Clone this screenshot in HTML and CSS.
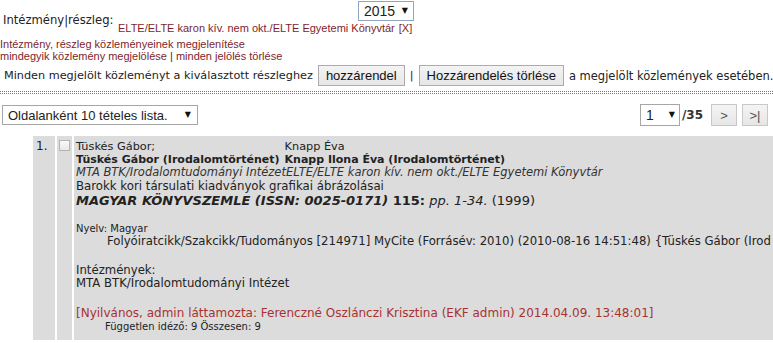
FILE: index.html
```html
<!DOCTYPE html>
<html lang="hu">
<head>
    <meta charset="UTF-8">
    <meta name="viewport" content="width=device-width, initial-scale=1.0">
    <title>Közlemények listája</title>
    <link rel="stylesheet" href="styles.css">
</head>
<body>
    <div class="filter">
        <span class="filter-label">Intézmény|részleg:</span>
        <div class="filter-pick">
            <span class="selectbox year"><select><option>2015</option></select></span>
            <span class="unit">ELTE/ELTE karon kív. nem okt./ELTE Egyetemi Könyvtár <a href="#">[X]</a></span>
        </div>
    </div>

    <div class="links">
        <a href="#">Intézmény, részleg közleményeinek megjelenítése</a><br>
        <a href="#">mindegyik közlemény megjelölése</a> | <a href="#">minden jelölés törlése</a>
    </div>

    <div class="assign">
        <span>Minden megjelölt közleményt a kiválasztott részleghez</span>
        <button class="btn">hozzárendel</button> |
        <button class="btn">Hozzárendelés törlése</button>
        <span class="assign-tail">a megjelölt közlemények esetében.</span>
    </div>

    <div class="sep"></div>

    <div class="pager">
        <span class="selectbox perpage"><select><option>Oldalanként 10 tételes lista.</option></select></span>
        <div class="pages">
            <span class="selectbox pagesel"><select><option>1</option></select></span>
            <b class="total">/35</b>
            <button class="btn small">&gt;</button>
            <button class="btn small">&gt;|</button>
        </div>
    </div>

    <div class="entry">
        <div class="num">1.</div>
        <div class="mark"><input type="checkbox"></div>
        <div class="item">
            <div class="authors">
                <span>Tüskés Gábor;</span><span>Knapp Éva</span>
                <b>Tüskés Gábor (Irodalomtörténet)</b><b>Knapp Ilona Éva (Irodalomtörténet)</b>
            </div>
            <div class="inst">MTA BTK/Irodalomtudományi IntézetELTE/ELTE karon kív. nem okt./ELTE Egyetemi Könyvtár</div>
            <div class="title">Barokk kori társulati kiadványok grafikai ábrázolásai</div>
            <div class="source"><b><i>MAGYAR KÖNYVSZEMLE (ISSN: 0025-0171)</i> 115:</b> <i>pp. 1-34.</i> (1999)</div>

            <div class="lang">Nyelv: Magyar</div>
            <div class="type">Folyóiratcikk/Szakcikk/Tudományos [214971] MyCite (Forrásév: 2010) (2010-08-16 14:51:48) {Tüskés Gábor (Irod</div>

            <div class="insts">Intézmények:<br>MTA BTK/Irodalomtudományi Intézet</div>

            <div class="status">[Nyilvános, admin láttamozta: Ferenczné Oszlánczi Krisztina (EKF admin) 2014.04.09. 13:48:01]</div>
            <div class="cites">Független idéző: 9 Összesen: 9</div>
        </div>
    </div>
</body>
</html>
```

FILE: styles.css
```css
html, body {
    overflow: hidden;
}
body {
    margin: 0;
    font-family: "DejaVu Sans", Verdana, sans-serif;
    font-size: 11px;
    color: #222;
    background: #fff;
}
a {
    color: #7d1f2c;
    text-decoration: none;
}
.filter {
    display: flex;
    align-items: flex-start;
    padding-left: 3px;
}
.filter-label {
    margin-top: 13px;
    width: 115px;
    font-size: 11.6px;
}
.filter-pick {
    display: flex;
    flex-direction: column;
    align-items: flex-end;
    width: 296px;
}
.unit {
    align-self: flex-start;
    font-family: "Liberation Sans", Arial, sans-serif;
    font-size: 11px;
    line-height: 13px;
    color: #7d1f2c;
    margin-top: 1px;
}
.unit a {
    margin-left: 1px;
}
.links {
    margin-top: 3px;
    font-family: "Liberation Sans", Arial, sans-serif;
    font-size: 11px;
    line-height: 12px;
    color: #333;
}
.assign {
    display: flex;
    align-items: center;
    gap: 5px;
    margin-top: 3px;
    padding-left: 4px;
    font-size: 11.25px;
    white-space: nowrap;
}
.assign-tail {
    font-size: 11.5px;
}
.btn {
    font-family: "Liberation Sans", Arial, sans-serif;
    font-size: 13px;
    color: #111;
    height: 21px;
    padding: 0 7px;
    background: linear-gradient(#f4f4f4, #e6e6e6);
    border: 1px solid #acacac;
    border-radius: 0;
}
.sep {
    margin-top: 5px;
    height: 0;
    border-top: 1px dotted #777;
    border-bottom: 1px dotted #777;
    padding-top: 1px;
}
.pager {
    display: flex;
    justify-content: space-between;
    align-items: center;
    margin-top: 10px;
    padding: 0 5px 0 2px;
}
.pages {
    display: flex;
    align-items: center;
}
.total {
    margin: 0 3px 0 2px;
    font-size: 12px;
    color: #333;
}
.btn.small {
    width: 26px;
    height: 22px;
    padding: 0;
    margin-left: 5px;
    color: #555;
    border-color: #c8c8c8;
}
.selectbox {
    position: relative;
    display: inline-block;
}
.selectbox select {
    appearance: none;
    -webkit-appearance: none;
    font-family: "Liberation Sans", Arial, sans-serif;
    font-size: 14px;
    color: #222;
    background: #fff;
    border: 1px solid #a6a6a6;
    border-radius: 0;
    height: 20px;
    padding: 0 0 0 5px;
    margin: 0;
}
.selectbox::after {
    content: "\25BC";
    position: absolute;
    top: 5px;
    right: 6px;
    font-size: 8px;
    color: #111;
    pointer-events: none;
}
.year select {
    width: 56px;
    height: 20px;
    border-color: #8fa6c2;
    margin-top: 1px;
}
.year::after {
    top: 6px;
}
.perpage select {
    width: 196px;
    height: 20px;
    font-size: 13px;
}
.perpage::after {
    right: 7px;
}
.pagesel select {
    width: 40px;
    height: 22px;
}
.pagesel::after {
    top: 6px;
    right: 5px;
}
.entry {
    display: flex;
    gap: 2px;
    margin: 10px 0 0 33px;
    height: 204px;
}
.entry > div {
    background: #dcdcdc;
}
.num {
    flex: none;
    width: 19px;
    padding: 3px 0 0 3px;
    font-size: 12px;
    line-height: 14px;
}
.mark {
    flex: none;
    width: 15px;
}
.mark input {
    appearance: none;
    -webkit-appearance: none;
    display: block;
    width: 11px;
    height: 11px;
    margin: 4px 0 0 2px;
    border: 1px solid #b4b4b4;
    background: linear-gradient(#fafafa, #e8e8e8);
}
.item {
    flex: 1;
    min-width: 0;
    padding: 4px 0 0 2px;
    white-space: nowrap;
    overflow: hidden;
    font-size: 11.7px;
    line-height: 13px;
}
.authors {
    display: grid;
    grid-template-columns: max-content max-content;
    column-gap: 5px;
    justify-content: start;
}
.authors span {
    font-size: 11.3px;
}
.authors b {
    font-size: 11px;
}
.inst {
    font-style: italic;
    font-size: 11.5px;
    color: #333;
}
.title {
    font-size: 11.75px;
    line-height: 15px;
}
.source {
    font-size: 13px;
    line-height: 14px;
}
.lang {
    margin-top: 14px;
    font-size: 10px;
}
.type {
    padding-left: 31px;
}
.insts {
    margin-top: 16px;
}
.status {
    margin-top: 16px;
    font-size: 12px;
    line-height: 15px;
    color: #a83232;
}
.cites {
    padding-left: 29px;
    font-size: 10px;
    line-height: 12px;
}
```
